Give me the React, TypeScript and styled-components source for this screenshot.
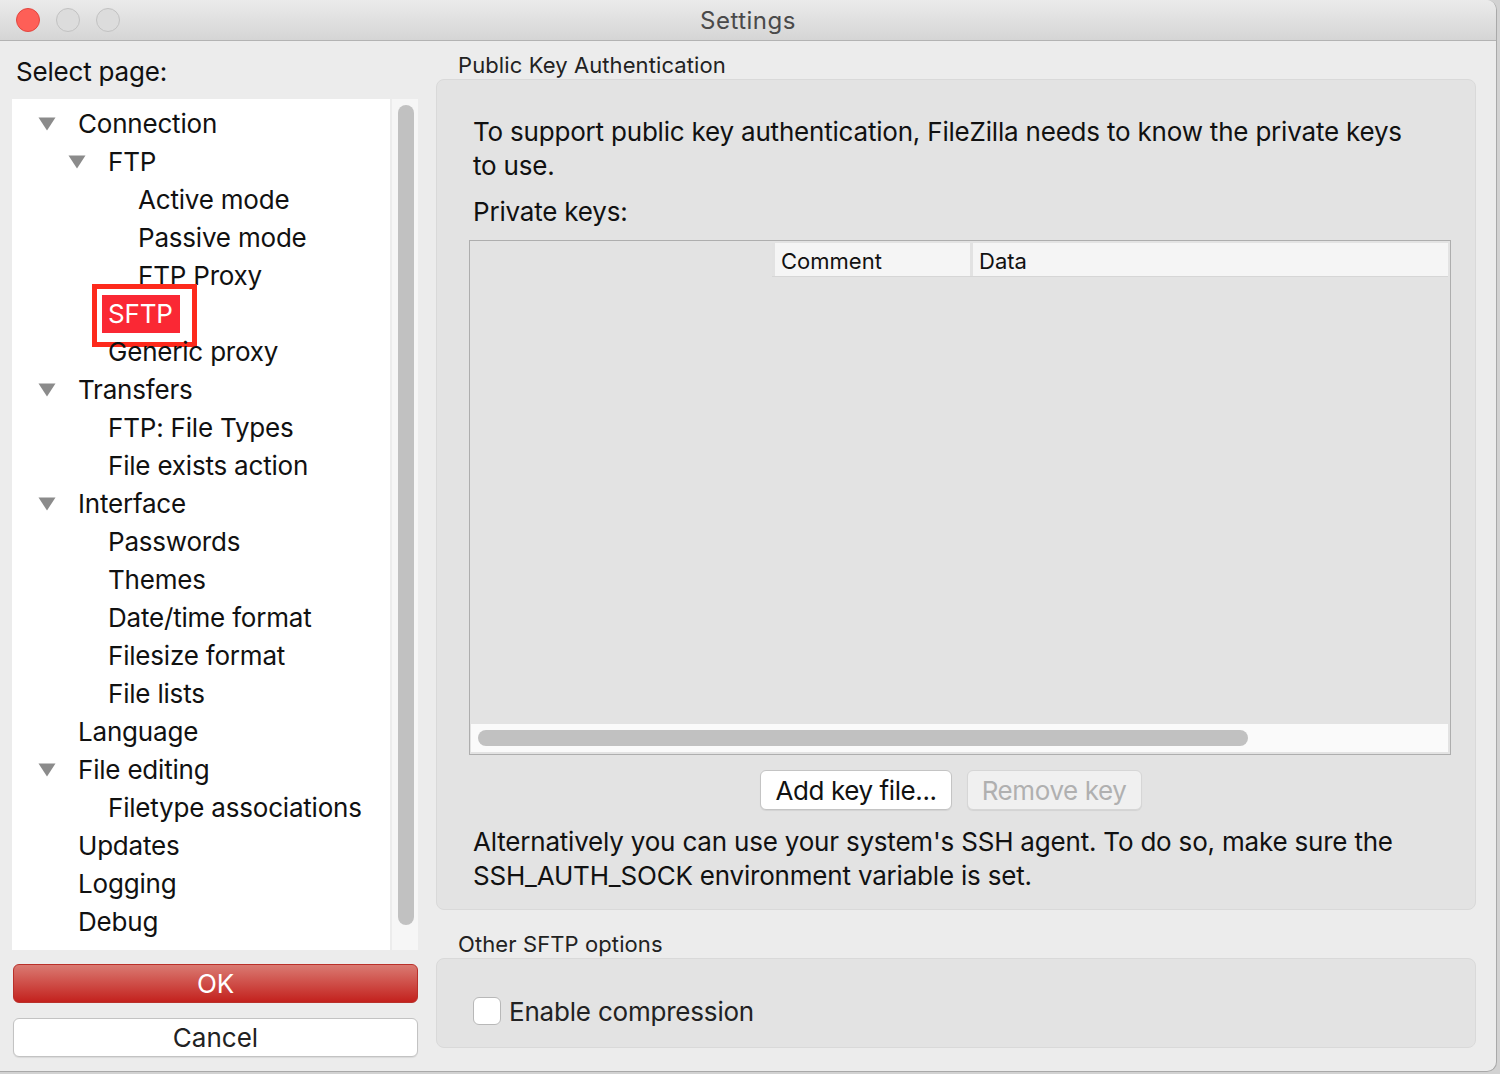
import React from "react";
import styled, { createGlobalStyle } from "styled-components";

const GlobalStyle = createGlobalStyle`
  html, body { margin: 0; padding: 0; background: #d2d2d2; }
  body {
    font-family: "Inter", "Noto Sans", "Liberation Sans", sans-serif;
    -webkit-font-smoothing: antialiased;
  }
  #root { width: 1500px; height: 1074px; overflow: hidden; }
  * { box-sizing: border-box; }
`;

const Window = styled.div`
  width: 1497px;
  height: 1072px;
  background: #ececec;
  border-right: 1px solid #a9a9a9;
  border-bottom: 1px solid #a9a9a9;
  border-radius: 0 10px 10px 0;
  display: flex;
  flex-direction: column;
  overflow: hidden;
`;

const TitleBar = styled.div`
  height: 41px;
  flex: none;
  display: grid;
  grid-template-columns: 1fr auto 1fr;
  align-items: center;
  background: linear-gradient(#ebebeb, #d5d5d5);
  border-bottom: 1px solid #b3b3b3;
`;

const Lights = styled.div`
  display: flex;
  gap: 16px;
  padding-left: 16px;
`;

const Light = styled.span<{ $red?: boolean }>`
  width: 24px;
  height: 24px;
  border-radius: 50%;
  background: ${(p) => (p.$red ? "#fe5f57" : "#dcdcdc")};
  border: 1px solid ${(p) => (p.$red ? "#e2463f" : "#c2c2c2")};
`;

const Title = styled.div`
  font-size: 24px;
  color: #4a4a4a;
  letter-spacing: 0.5px;
`;

const Body = styled.div`
  flex: 1;
  display: flex;
  align-items: flex-start;
  gap: 18px;
  padding: 12px 20px 0 12px;
`;

const LeftColumn = styled.div`
  width: 406px;
  display: flex;
  flex-direction: column;
`;

const SelectLabel = styled.div`
  font-size: 26px;
  line-height: 30px;
  margin: 4px 0 12px 4px;
  color: #111;
  letter-spacing: -0.2px;
`;

const TreeArea = styled.div`
  height: 851px;
  display: flex;
  gap: 2px;
`;

const TreeList = styled.div`
  width: 378px;
  background: #ffffff;
  padding-top: 6px;
  display: flex;
  flex-direction: column;
`;

const ScrollTrack = styled.div`
  flex: 1;
  background: #f6f6f6;
  padding: 6px 4px 0 6px;
`;

const ScrollThumb = styled.div`
  height: 820px;
  border-radius: 8px;
  background: #c1c1c1;
`;

const TreeRow = styled.div<{ $level: number }>`
  height: 38px;
  display: flex;
  align-items: center;
  padding-left: ${(p) => 66 + p.$level * 30}px;
  position: relative;
`;

const Twisty = styled.svg<{ $level: number }>`
  position: absolute;
  left: ${(p) => 26 + p.$level * 30}px;
  top: 12px;
  width: 18px;
  height: 14px;
`;

const ItemLabel = styled.span<{ $selected?: boolean }>`
  font-size: 26px;
  line-height: 38px;
  color: ${(p) => (p.$selected ? "#ffffff" : "#111111")};
  background: ${(p) => (p.$selected ? "#fa2834" : "transparent")};
  margin-left: ${(p) => (p.$selected ? "-6px" : "0")};
  padding: ${(p) => (p.$selected ? "0 7px 0 6px" : "0")};
  letter-spacing: -0.2px;
  position: relative;
  white-space: nowrap;
`;

const Annotation = styled.span`
  position: absolute;
  top: -11px;
  left: -10px;
  right: -17px;
  bottom: -14px;
  border: 5px solid #fd2a1c;
  pointer-events: none;
`;

const PrimaryButton = styled.button`
  margin-top: 14px;
  margin-left: 1px;
  height: 39px;
  border: 1px solid #b9302a;
  border-radius: 6px;
  background: linear-gradient(#da7a72, #c3211d);
  color: #ffffff;
  font-family: inherit;
  font-size: 26px;
  letter-spacing: -0.1px;
  padding: 0;
`;

const PlainButton = styled.button`
  margin-top: 15px;
  margin-left: 1px;
  height: 39px;
  border: 1px solid #c3c3c3;
  border-radius: 6px;
  background: #ffffff;
  color: #222222;
  font-family: inherit;
  font-size: 26px;
  letter-spacing: 0;
  padding: 0;
  box-shadow: 0 1px 1px rgba(0, 0, 0, 0.08);
`;

const RightColumn = styled.div`
  flex: 1;
  display: flex;
  flex-direction: column;
`;

const GroupLabel = styled.div<{ $top?: number }>`
  font-size: 22px;
  line-height: 24px;
  color: #222222;
  margin: ${(p) => p.$top ?? 0}px 0 2px 22px;
  letter-spacing: 0.1px;
`;

const GroupBox = styled.div<{ $height: number }>`
  height: ${(p) => p.$height}px;
  background: #e3e3e3;
  border: 1px solid #d9d9d9;
  border-radius: 8px;
  display: flex;
  flex-direction: column;
  padding: 35px 24px 0 36px;
`;

const Paragraph = styled.p`
  margin: 0;
  font-size: 26px;
  line-height: 34px;
  color: #111111;
  letter-spacing: -0.2px;
  white-space: nowrap;
`;

const KeysLabel = styled(Paragraph)`
  margin-top: 12px;
`;

const KeyList = styled.div`
  margin: 11px 0 0 -4px;
  width: 982px;
  height: 515px;
  border: 1px solid #aeaeae;
  background: #e3e3e3;
  display: flex;
  flex-direction: column;
  padding: 2px 2px 2px 1px;
`;

const HeaderRow = styled.div`
  margin-left: 301px;
  height: 34px;
  background: #f5f5f5;
  border-bottom: 1px solid #d6d6d6;
  display: flex;
`;

const HeaderCell = styled.div<{ $width?: number }>`
  ${(p) => (p.$width ? `width: ${p.$width}px;` : "flex: 1;")}
  border-left: 3px solid #e2e2e2;
  padding-left: 6px;
  font-size: 22px;
  line-height: 36px;
  color: #111111;
  letter-spacing: 0;
`;

const ListBody = styled.div`
  flex: 1;
`;

const HScroll = styled.div`
  height: 28px;
  background: #fafafa;
  padding: 6px 0 0 7px;
`;

const HThumb = styled.div`
  width: 770px;
  height: 16px;
  border-radius: 8px;
  background: #c1c1c1;
`;

const ButtonRow = styled.div`
  margin: 15px 0 0 -4px;
  width: 982px;
  display: flex;
  justify-content: center;
  gap: 15px;
  padding-right: 18px;
`;

const SmallButton = styled.button<{ $disabled?: boolean }>`
  height: 40px;
  padding: 0 14px;
  border: 1px solid ${(p) => (p.$disabled ? "#d6d6d6" : "#c4c4c4")};
  border-radius: 6px;
  background: ${(p) => (p.$disabled ? "#f0f0f0" : "#ffffff")};
  color: ${(p) => (p.$disabled ? "#b0b0b0" : "#111111")};
  font-family: inherit;
  font-size: 26px;
  letter-spacing: -0.4px;
  box-shadow: 0 1px 1px rgba(0, 0, 0, 0.07);
`;

const AltParagraph = styled(Paragraph)`
  margin-top: 15px;
`;

const OptionRow = styled.label`
  display: flex;
  align-items: center;
  gap: 8px;
  margin-top: 3px;
  height: 28px;
`;

const CheckBox = styled.span`
  width: 28px;
  height: 28px;
  border: 1px solid #b8b8b8;
  border-radius: 6px;
  background: #ffffff;
`;

const OptionText = styled.span`
  font-size: 26px;
  color: #222222;
  letter-spacing: -0.2px;
`;

type Item = { label: string; level: number; open?: boolean; selected?: boolean };

const items: Item[] = [
  { label: "Connection", level: 0, open: true },
  { label: "FTP", level: 1, open: true },
  { label: "Active mode", level: 2 },
  { label: "Passive mode", level: 2 },
  { label: "FTP Proxy", level: 2 },
  { label: "SFTP", level: 1, selected: true },
  { label: "Generic proxy", level: 1 },
  { label: "Transfers", level: 0, open: true },
  { label: "FTP: File Types", level: 1 },
  { label: "File exists action", level: 1 },
  { label: "Interface", level: 0, open: true },
  { label: "Passwords", level: 1 },
  { label: "Themes", level: 1 },
  { label: "Date/time format", level: 1 },
  { label: "Filesize format", level: 1 },
  { label: "File lists", level: 1 },
  { label: "Language", level: 0 },
  { label: "File editing", level: 0, open: true },
  { label: "Filetype associations", level: 1 },
  { label: "Updates", level: 0 },
  { label: "Logging", level: 0 },
  { label: "Debug", level: 0 },
];

export default function App() {
  return (
    <>
      <GlobalStyle />
      <Window>
        <TitleBar>
          <Lights>
            <Light $red />
            <Light />
            <Light />
          </Lights>
          <Title>Settings</Title>
          <div />
        </TitleBar>
        <Body>
          <LeftColumn>
            <SelectLabel>Select page:</SelectLabel>
            <TreeArea>
              <TreeList>
                {items.map((it) => (
                  <TreeRow key={it.label} $level={it.level}>
                    {it.open && (
                      <Twisty $level={it.level} viewBox="0 0 18 14">
                        <path d="M0.5 0.5 L17.5 0.5 L9 13.5 Z" fill="#8b8b8b" />
                      </Twisty>
                    )}
                    <ItemLabel $selected={it.selected}>
                      {it.label}
                      {it.selected && <Annotation />}
                    </ItemLabel>
                  </TreeRow>
                ))}
              </TreeList>
              <ScrollTrack>
                <ScrollThumb />
              </ScrollTrack>
            </TreeArea>
            <PrimaryButton>OK</PrimaryButton>
            <PlainButton>Cancel</PlainButton>
          </LeftColumn>
          <RightColumn>
            <GroupLabel>Public Key Authentication</GroupLabel>
            <GroupBox $height={831}>
              <Paragraph>
                To support public key authentication, FileZilla needs to know the private keys
                <br />
                to use.
              </Paragraph>
              <KeysLabel>Private keys:</KeysLabel>
              <KeyList>
                <HeaderRow>
                  <HeaderCell $width={198}>Comment</HeaderCell>
                  <HeaderCell>Data</HeaderCell>
                </HeaderRow>
                <ListBody />
                <HScroll>
                  <HThumb />
                </HScroll>
              </KeyList>
              <ButtonRow>
                <SmallButton>Add key file...</SmallButton>
                <SmallButton $disabled>Remove key</SmallButton>
              </ButtonRow>
              <AltParagraph>
                Alternatively you can use your system's SSH agent. To do so, make sure the
                <br />
                SSH_AUTH_SOCK environment variable is set.
              </AltParagraph>
            </GroupBox>
            <GroupLabel $top={22}>Other SFTP options</GroupLabel>
            <GroupBox $height={90}>
              <OptionRow>
                <CheckBox />
                <OptionText>Enable compression</OptionText>
              </OptionRow>
            </GroupBox>
          </RightColumn>
        </Body>
      </Window>
    </>
  );
}
